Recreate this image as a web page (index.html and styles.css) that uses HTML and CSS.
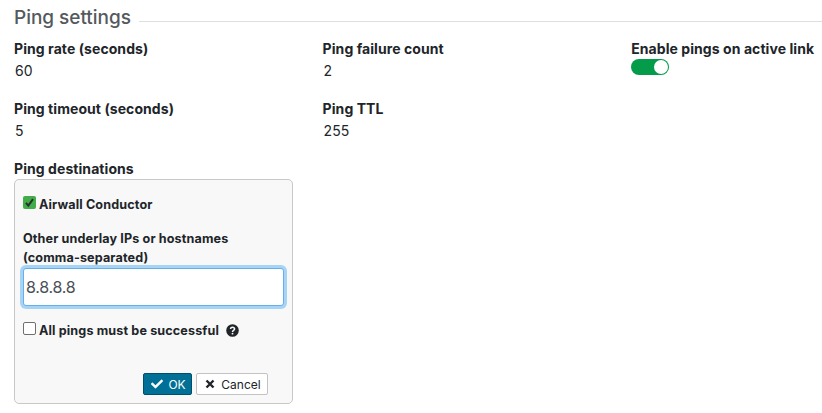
FILE: index.html
```html
<!DOCTYPE html>
<html lang="en">
<head>
<meta charset="utf-8">
<title>Ping settings</title>
<link rel="stylesheet" href="styles.css">
</head>
<body>
<section class="settings">
  <header class="section-head"><h2>Ping settings</h2><span class="rule"></span></header>
  <div class="grid">
    <div class="field"><div class="label">Ping rate (seconds)</div><div class="value">60</div></div>
    <div class="field"><div class="label">Ping failure count</div><div class="value">2</div></div>
    <div class="field"><div class="label">Enable pings on active link</div><div class="switch"><span class="knob"></span></div></div>
    <div class="field"><div class="label">Ping timeout (seconds)</div><div class="value">5</div></div>
    <div class="field"><div class="label">Ping TTL</div><div class="value">255</div></div>
  </div>
  <div class="label">Ping destinations</div>
  <form class="panel">
    <div class="check-row">
      <span class="box checked"><svg viewBox="0 0 13 13"><path d="M3 6.9 5.3 9.6 10 3.2"/></svg></span>
      <span>Airwall Conductor</span>
    </div>
    <label class="caption" for="hosts">Other underlay IPs or hostnames<br>(comma-separated)</label>
    <input class="hosts" id="hosts" type="text" value="8.8.8.8">
    <div class="check-row second">
      <span class="box"></span>
      <span>All pings must be successful</span>
      <svg class="help" viewBox="0 0 512 512"><circle cx="256" cy="256" r="248"/><path class="q" d="M176 196C183 110 342 110 338 198C335 255 256 250 256 312"/><circle class="dot" cx="256" cy="382" r="36"/></svg>
    </div>
    <div class="actions">
      <button class="btn primary" type="button"><svg class="tick" viewBox="0 0 512 512"><path d="M173.898 439.404l-166.4-166.4c-9.997-9.997-9.997-26.206 0-36.204l36.203-36.204c9.997-9.998 26.207-9.998 36.204 0L192 312.69 432.095 72.596c9.997-9.997 26.207-9.997 36.204 0l36.203 36.204c9.997 9.997 9.997 26.206 0 36.204l-294.4 294.401c-9.998 9.997-26.207 9.997-36.204-.001z"/></svg>OK</button>
      <button class="btn" type="button"><svg class="cross" viewBox="0 0 10 10"><path d="M1.5 1.5 8.5 8.5M8.5 1.5 1.5 8.5"/></svg>Cancel</button>
    </div>
  </form>
</section>
</body>
</html>
```

FILE: styles.css
```css
* { box-sizing: border-box; }
body {
  margin: 0;
  background: #fff;
  color: #212529;
  font-family: Inter, "Liberation Sans", sans-serif;
  font-size: 14px;
  overflow: hidden;
}
.settings { padding: 5px 0 0 14px; }
.section-head { display: flex; align-items: center; height: 24px; }
.section-head h2 {
  margin: 0;
  padding-top: 1px;
  font-size: 19px;
  line-height: 24px;
  font-weight: 500;
  letter-spacing: -0.03px;
  color: #54595d;
}
.rule { flex: 1; height: 1px; margin: 8px 0 0 8px; background: #dedede; }
.grid {
  display: grid;
  grid-template-columns: 308.6px 308.6px 1fr;
  grid-auto-rows: 60px;
  margin-top: 10px;
}
.label { font-weight: 700; line-height: 20px; letter-spacing: 0.07px; white-space: nowrap; }
.value { line-height: 20px; margin-top: 2px; padding-left: 1px; }
.switch {
  display: flex;
  justify-content: flex-end;
  width: 38px;
  height: 16px;
  padding: 1px;
  border-radius: 8px;
  background: #049b4a;
}
.knob { width: 14px; height: 14px; border-radius: 50%; background: #fff; }
.panel {
  width: 279px;
  height: 225px;
  padding: 15px 8px 0;
  border: 1px solid #c8c8c8;
  border-radius: 5px;
  background: #f8f8f8;
  font-size: 12.6px;
  font-weight: 700;
  letter-spacing: 0.13px;
}
.check-row { display: flex; line-height: 19px; height: 19px; gap: 3px; }
.second { margin-top: 15px; }
.box {
  width: 13px;
  height: 13px;
  margin-top: 1px;
  border: 1px solid #6f6f6f;
  border-radius: 2px;
  background: #fff;
}
.checked { border: 0; background: #42ac49; }
.checked svg { display: block; fill: none; stroke: #263329; stroke-width: 2; }
.help { width: 13px; height: 13px; margin: 3px 0 0 4px; fill: #212529; }
.help .q { fill: none; stroke: #f8f8f8; stroke-width: 60; }
.help .dot { fill: #f8f8f8; }
.caption { display: block; margin-top: 15px; padding-bottom: 1px; line-height: 19px; }
.hosts {
  display: block;
  width: 261px;
  height: 38px;
  margin: 0;
  padding: 0 2px;
  border: 1px solid #66afe9;
  border-radius: 3px;
  outline: 0;
  background: #fff;
  box-shadow: 0 0 0 3px #a6d4f7;
  color: #495057;
  font: 400 16px Inter, sans-serif;
  letter-spacing: -0.25px;
}
.actions { display: flex; gap: 4px; margin: 33px 16px 0 0; justify-content: flex-end; }
.btn {
  display: flex;
  align-items: center;
  justify-content: center;
  gap: 6px;
  width: 72px;
  height: 22px;
  padding: 0 0 0 2px;
  border: 1px solid #c3c3c3;
  border-radius: 2px;
  background: #fff;
  color: #212529;
  font: 400 12px Inter, sans-serif;
}
.primary { width: 49px; gap: 5px; border-color: #00506b; background: #007096; color: #fff; }
.tick { width: 12px; height: 12px; fill: #fff; }
.cross { width: 10px; height: 10px; fill: none; stroke: #212529; stroke-width: 2.4; }
```
